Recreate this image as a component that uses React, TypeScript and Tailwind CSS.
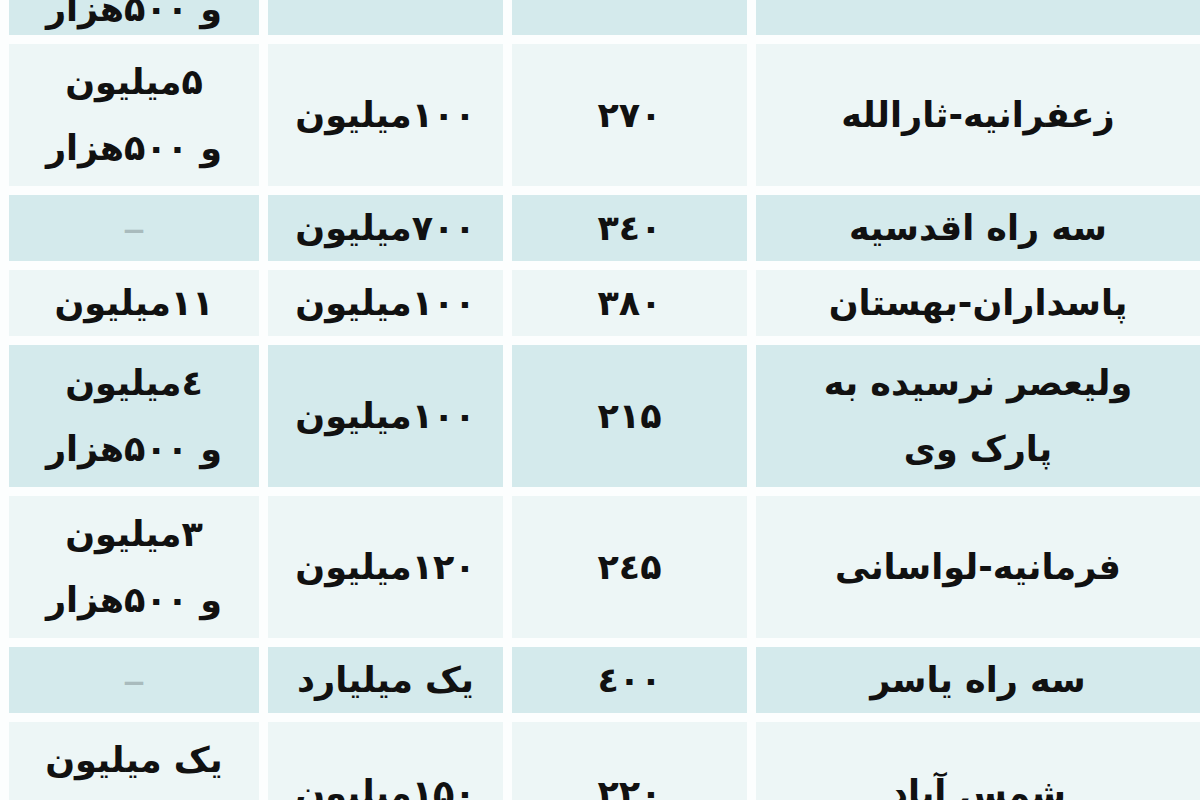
type Row = {
  shaded: boolean
  tall: boolean
  cells: [string, string, string, string]
}

// cells in visual order, left to right: rent, price, area, neighbourhood
const rows: Row[] = [
  { shaded: true, tall: true, cells: ["۵میلیون\nو ۵۰۰هزار", "", "", ""] },
  { shaded: false, tall: true, cells: ["۵میلیون\nو ۵۰۰هزار", "۱۰۰میلیون", "۲۷۰", "زعفرانیه-ثارالله"] },
  { shaded: true, tall: false, cells: ["–", "۷۰۰میلیون", "۳٤۰", "سه راه اقدسیه"] },
  { shaded: false, tall: false, cells: ["۱۱میلیون", "۱۰۰میلیون", "۳۸۰", "پاسداران-بهستان"] },
  { shaded: true, tall: true, cells: ["٤میلیون\nو ۵۰۰هزار", "۱۰۰میلیون", "۲۱۵", "ولیعصر نرسیده به\nپارک وی"] },
  { shaded: false, tall: true, cells: ["۳میلیون\nو ۵۰۰هزار", "۱۲۰میلیون", "۲٤۵", "فرمانیه-لواسانی"] },
  { shaded: true, tall: false, cells: ["–", "یک میلیارد", "٤۰۰", "سه راه یاسر"] },
  { shaded: false, tall: true, cells: ["یک میلیون\nو ۵۰۰هزار", "۱۵۰میلیون", "۲۲۰", "شمس آباد"] },
]

function Cell({ text, shaded, first }: { text: string; shaded: boolean; first: boolean }) {
  const isDash = text === "–"
  return (
    <div
      dir="rtl"
      className={`flex items-center justify-center overflow-hidden text-center whitespace-pre-line ${
        shaded ? "bg-[#d4eaec]" : "bg-[#edf6f6]"
      }`}
    >
      {isDash ? (
        <span className="text-[46px] leading-none font-normal text-[#a9bbbd]">–</span>
      ) : (
        <span className={`leading-[66px] ${first ? "translate-y-[12px]" : ""}`}>{text}</span>
      )}
    </div>
  )
}

export default function App() {
  return (
    <div className="h-[800px] w-[1200px] overflow-hidden bg-[#fcfefe]">
      <div
        className="-mt-[107px] grid grid-cols-[250px_235px_235px_1fr] gap-[9px] pl-[9px] text-[35px] font-bold text-[#111]"
        style={{ fontFamily: '"DejaVu Sans", sans-serif' }}
      >
        {rows.map((row, i) =>
          row.cells.map((c, j) => (
            <div key={`${i}-${j}`} className={`grid ${row.tall ? "h-[142px]" : "h-[66px]"}`}>
              <Cell text={c} shaded={row.shaded} first={i === 0} />
            </div>
          ))
        )}
      </div>
    </div>
  )
}
